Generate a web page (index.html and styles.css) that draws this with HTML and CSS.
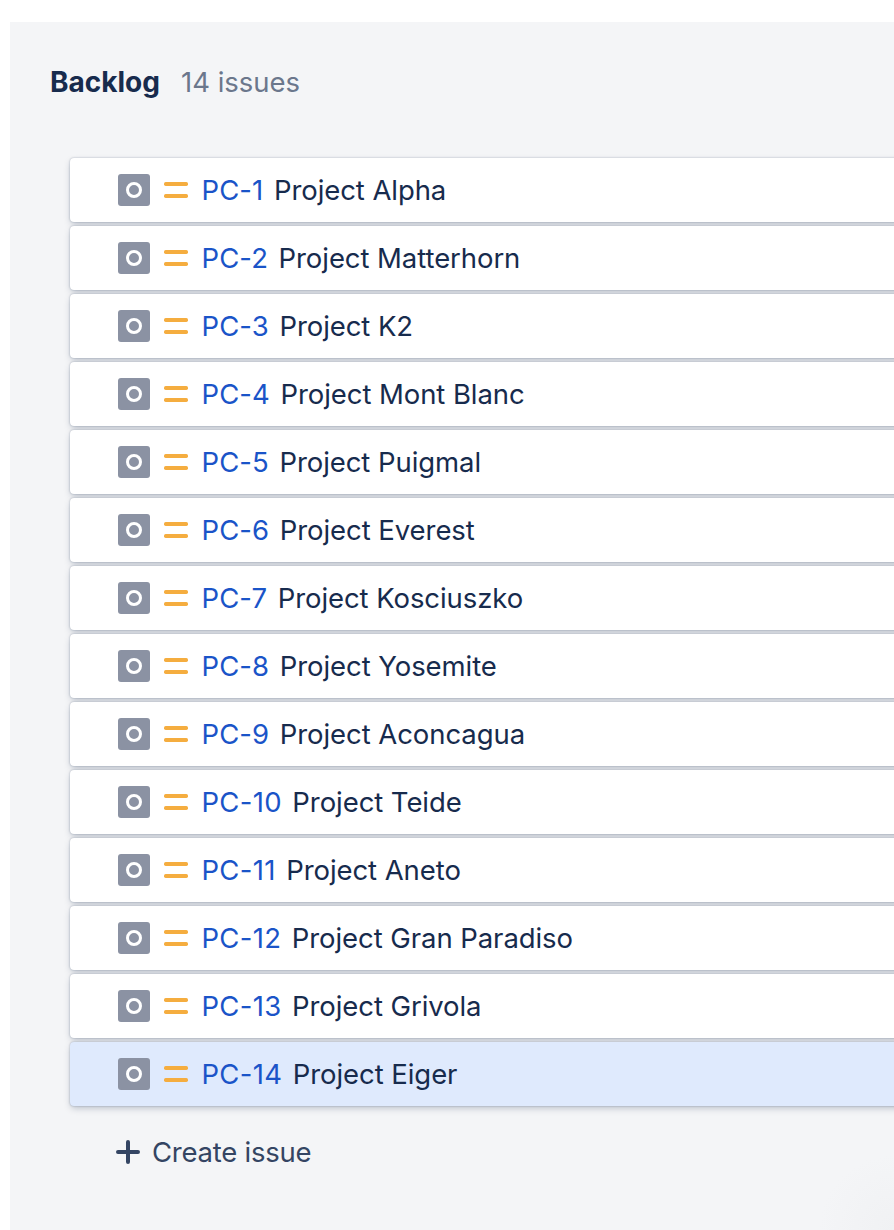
FILE: index.html
```
<!DOCTYPE html>
<html lang="en">
<head>
<meta charset="utf-8">
<title>Backlog</title>
<link rel="stylesheet" href="styles.css">
</head>
<body>
<svg class="symbols" aria-hidden="true">
  <symbol id="type" viewBox="0 0 32 32"><rect width="32" height="32" rx="3" fill="#8b92a3"/><circle cx="16" cy="16" r="6.5" fill="none" stroke="#fff" stroke-width="3"/></symbol>
  <symbol id="medium" viewBox="0 0 24 16"><rect width="24" height="4" rx="1.7" fill="#f5ad3f"/><rect y="12" width="24" height="4" rx="1.7" fill="#f5ad3f"/></symbol>
</svg>
<main class="backlog">
  <header class="header"><h1 class="title">Backlog</h1><span class="count">14 issues</span></header>
  <ul class="issues">
    <li class="issue"><svg class="type"><use href="#type"/></svg><svg class="priority"><use href="#medium"/></svg><a class="key">PC-1</a><span class="summary">Project Alpha</span></li>
    <li class="issue"><svg class="type"><use href="#type"/></svg><svg class="priority"><use href="#medium"/></svg><a class="key">PC-2</a><span class="summary">Project Matterhorn</span></li>
    <li class="issue"><svg class="type"><use href="#type"/></svg><svg class="priority"><use href="#medium"/></svg><a class="key">PC-3</a><span class="summary">Project K2</span></li>
    <li class="issue"><svg class="type"><use href="#type"/></svg><svg class="priority"><use href="#medium"/></svg><a class="key">PC-4</a><span class="summary">Project Mont Blanc</span></li>
    <li class="issue"><svg class="type"><use href="#type"/></svg><svg class="priority"><use href="#medium"/></svg><a class="key">PC-5</a><span class="summary">Project Puigmal</span></li>
    <li class="issue"><svg class="type"><use href="#type"/></svg><svg class="priority"><use href="#medium"/></svg><a class="key">PC-6</a><span class="summary">Project Everest</span></li>
    <li class="issue"><svg class="type"><use href="#type"/></svg><svg class="priority"><use href="#medium"/></svg><a class="key">PC-7</a><span class="summary">Project Kosciuszko</span></li>
    <li class="issue"><svg class="type"><use href="#type"/></svg><svg class="priority"><use href="#medium"/></svg><a class="key">PC-8</a><span class="summary">Project Yosemite</span></li>
    <li class="issue"><svg class="type"><use href="#type"/></svg><svg class="priority"><use href="#medium"/></svg><a class="key">PC-9</a><span class="summary">Project Aconcagua</span></li>
    <li class="issue"><svg class="type"><use href="#type"/></svg><svg class="priority"><use href="#medium"/></svg><a class="key wide">PC-10</a><span class="summary">Project Teide</span></li>
    <li class="issue"><svg class="type"><use href="#type"/></svg><svg class="priority"><use href="#medium"/></svg><a class="key wide">PC-11</a><span class="summary">Project Aneto</span></li>
    <li class="issue"><svg class="type"><use href="#type"/></svg><svg class="priority"><use href="#medium"/></svg><a class="key wide">PC-12</a><span class="summary">Project Gran Paradiso</span></li>
    <li class="issue"><svg class="type"><use href="#type"/></svg><svg class="priority"><use href="#medium"/></svg><a class="key wide">PC-13</a><span class="summary">Project Grivola</span></li>
    <li class="issue selected"><svg class="type"><use href="#type"/></svg><svg class="priority"><use href="#medium"/></svg><a class="key wide">PC-14</a><span class="summary">Project Eiger</span></li>
  </ul>
  <div class="create"><svg class="plus" viewBox="0 0 24 24"><path d="M12 2v20M2 12h20" stroke="#344563" stroke-width="4" stroke-linecap="round"/></svg><span>Create issue</span></div>
</main>
</body>
</html>
```
FILE: styles.css
```
* { box-sizing: border-box; }
body {
  margin: 0;
  padding: 22px 0 0 10px;
  height: 1230px;
  overflow: hidden;
  background: #fff;
  font: 400 27.5px/40px Inter, sans-serif;
  letter-spacing: -0.25px;
  color: #172b4d;
}
.symbols { display: none; }
.backlog {
  height: 1208px;
  padding: 40px 0 0 40px;
  overflow: hidden;
  background: radial-gradient(circle at 100% 100%, #f0f1f3 0, #f4f5f7 75px) #f4f5f7;
}
.header { display: flex; gap: 21px; height: 96px; }
.title { margin: 0; font-size: 28px; font-weight: 700; line-height: 40px; letter-spacing: 0; }
.count { color: #6b778c; letter-spacing: 0; }
.issues {
  display: flex;
  flex-direction: column;
  gap: 4px;
  margin: 0 -12px 0 0;
  padding: 0 0 0 20px;
  list-style: none;
}
.issue {
  display: flex;
  align-items: center;
  height: 64px;
  padding-left: 48px;
  border-radius: 4px;
  background: #fff;
  box-shadow: 0 3px 7px -1px rgba(9, 30, 66, 0.25), 0 0 2px rgba(9, 30, 66, 0.31);
}
.selected { background: #dfeafd; }
.type { width: 32px; height: 32px; margin-right: 14px; }
.priority { width: 24px; height: 16px; margin-right: 14px; }
.key { margin: 0 10.5px 0 -0.5px; color: #1a54c8; letter-spacing: 0.1px; }
.wide { letter-spacing: 0.3px; }
.summary { letter-spacing: -0.07px; }
.create {
  display: flex;
  align-items: center;
  gap: 12px;
  padding: 26px 0 0 66px;
  color: #344563;
}
.plus { width: 24px; height: 24px; }
```
